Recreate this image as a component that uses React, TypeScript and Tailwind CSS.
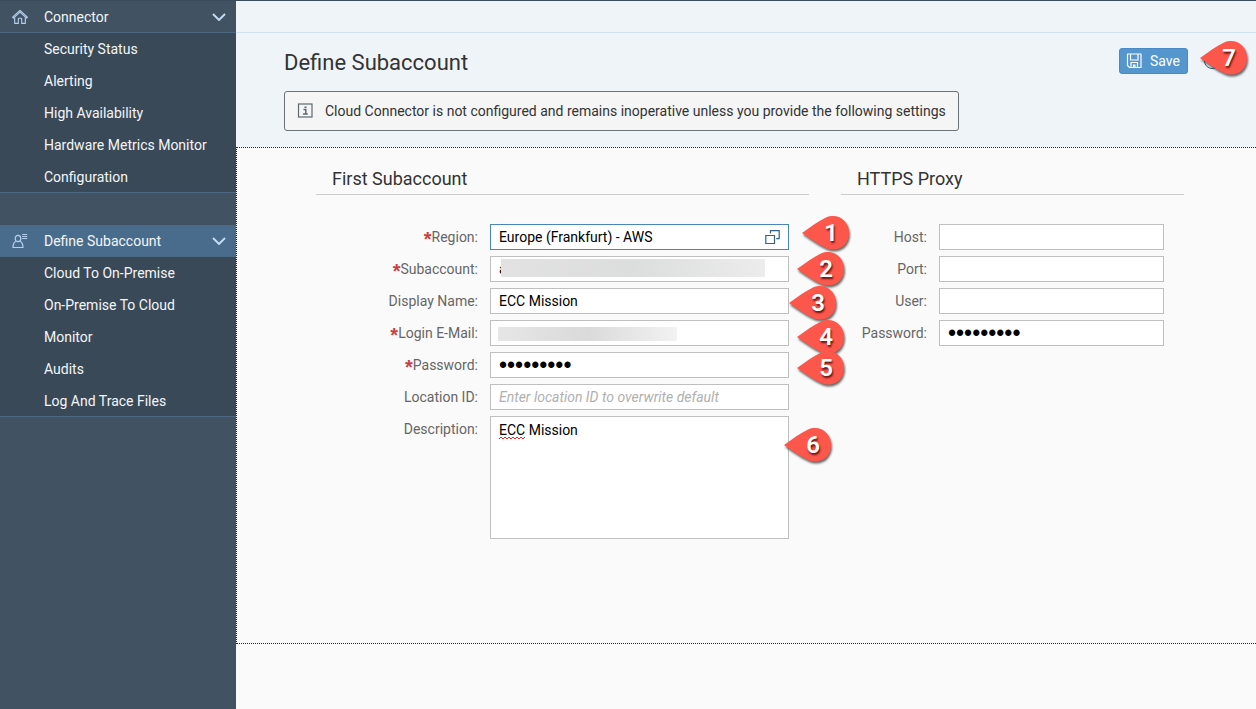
import React from "react";

const navGroups = [
  {
    title: "Connector",
    icon: "home",
    active: false,
    items: ["Security Status", "Alerting", "High Availability", "Hardware Metrics Monitor", "Configuration"],
  },
  {
    title: "Define Subaccount",
    icon: "account",
    active: true,
    items: ["Cloud To On-Premise", "On-Premise To Cloud", "Monitor", "Audits", "Log And Trace Files"],
  },
];

function HomeIcon() {
  return (
    <svg aria-hidden="true" className="size-4" viewBox="0 0 16 16" fill="none" stroke="#b5d0ee" strokeWidth="1.100">
      <path d="M.6 8.200 8 1.400l7.400 6.800-.9.900L8 3.200 1.500 9.100z" strokeLinejoin="round" />
      <path d="M2.700 8.500v5.900h3.600V9.900q0-.6.6-.6h2.200q.6 0 .6.6v4.500h3.600V8.500" strokeLinejoin="round" />
    </svg>
  );
}

function AccountIcon() {
  return (
    <svg aria-hidden="true" className="size-4" viewBox="0 0 16 16" fill="none" stroke="#b5d0ee" strokeWidth="1.200">
      <ellipse cx="6" cy="5.500" rx="2.800" ry="3.200" />
      <path d="M4 8.200C2 9 1 10.700 1 14.500h10C11 10.700 10 9 8 8.200" strokeLinejoin="round" />
      <path d="M10.200 1.500h5M10.200 3.500h5M10.200 5.500h5" strokeWidth="1" />
    </svg>
  );
}

function Chevron() {
  return (
    <svg aria-hidden="true" className="h-2 w-3.5" viewBox="0 0 14 8" fill="none" stroke="#c3dcf5" strokeWidth="1.900">
      <path d="M1 1l6 6 6-6" />
    </svg>
  );
}

function SaveIcon() {
  return (
    <svg aria-hidden="true" className="size-4" viewBox="0 0 16 16" fill="none" stroke="#fff" strokeWidth="1.200">
      <path d="M1.500 1h13.500v13.500H3.500l-2-2z" strokeLinejoin="round" />
      <path d="M4.500 1v6H12V1" />
      <path d="M5 14.500V9.500h6.500v5M7.500 14.500v-2.500h1.500v2.500" />
    </svg>
  );
}

function InfoIcon() {
  return (
    <svg aria-hidden="true" className="size-4 shrink-0" viewBox="0 0 16 16" fill="none" stroke="#5a6a70" strokeWidth="1.200">
      <rect x="1.500" y="1" width="13.500" height="13" />
      <path d="M7.500 4.300h2M6.500 6.600h2.300v4.400M6 11h4.800" strokeWidth="1.500" />
    </svg>
  );
}

function Marker({ n, className }: { n: number; className: string }) {
  return (
    <span className={"pointer-events-none absolute z-10 h-10 w-13 " + className}>
      <svg aria-hidden="true" className="size-full overflow-visible drop-shadow-[1px_2px_1px_rgba(0,0,0,0.6)]" viewBox="0 0 52 40">
        <path d="M0 17C8 11.500 16 5 24 1.500 36-3.500 47 5 47 17 47 29.500 36 37 24 32 16 28.500 8 22.500 0 17z" fill="#fd574b" />
      </svg>
      <span className="absolute top-0 left-0 w-[58px] text-center text-2xl leading-[34px] font-semibold text-white [text-shadow:1px_2px_2px_rgba(60,0,0,0.8)]">
        {n}
      </span>
    </span>
  );
}

function NavGroup({ group }: { group: (typeof navGroups)[number] }) {
  return (
    <div>
      <button
        type="button"
        className={
          "flex h-8 w-full items-center border-b pl-3 pr-2.5 text-left " +
          (group.active ? "border-[#4d6a84] bg-[#4a6c8c]" : "border-[#4c6883]")
        }
      >
        {group.icon === "home" ? <HomeIcon /> : <AccountIcon />}
        <span className="ml-4 flex-1">{group.title}</span>
        <Chevron />
      </button>
      <ul className="h-40 border-b border-[#4c6883] bg-[#3a4957]">
        {group.items.map((item) => (
          <li key={item}>
            <a href="#" className="block pl-11 leading-8">
              {item}
            </a>
          </li>
        ))}
      </ul>
    </div>
  );
}

const inputBase =
  "block h-[26px] w-full border border-[#bfbfbf] bg-white px-2 text-black outline-none placeholder:text-[#b0b0b0] placeholder:italic";
const inputBox = inputBase + " text-sm";
const secretBox = inputBase + " font-['Liberation_Sans',sans-serif] text-[23px]";

function Field({
  id,
  label,
  required,
  columns,
  children,
}: {
  id: string;
  label: string;
  required?: boolean;
  columns: string;
  children: React.ReactNode;
}) {
  return (
    <div className={"grid gap-3 " + columns}>
      <label htmlFor={id} className="h-[26px] text-right leading-[26px] whitespace-nowrap text-[#666]">
        {required && (
          <span className="font-['Liberation_Sans',sans-serif] text-xl leading-none font-bold text-[#cc3f3f] align-[-4px]">*</span>
        )}
        {label}:
      </label>
      <div className="relative min-w-0">{children}</div>
    </div>
  );
}

const leftCols = "grid-cols-[162fr_299fr]";
const rightCols = "grid-cols-[86fr_225fr]";

export default function App() {
  return (
    <div className="flex min-h-screen border-t border-[#3b4c5c] bg-[#fafafa] font-[Roboto,sans-serif] text-sm text-[#333]">
      <nav className="flex w-59 shrink-0 flex-col gap-8 bg-[#415262] text-[#f2f6fa]">
        {navGroups.map((g) => (
          <NavGroup key={g.title} group={g} />
        ))}
      </nav>

      <main className="min-w-0 flex-1">
        <div className="h-8 border-b border-[#cfe0f0] bg-[#eff4f9]" />
        <header className="bg-[#eff4f9] pt-3.5 pr-9 pb-4 pl-12">
          <div className="flex h-8 items-start">
            <h1 className="flex-1 text-[22px] leading-8">Define Subaccount</h1>
            <button
              type="button"
              className="mt-px flex h-[26px] items-center gap-2 rounded-[3px] border border-[#4a8ac4] bg-[#5496cd] pr-[7px] pl-1.5 text-white"
            >
              <SaveIcon />
              Save
            </button>
            <div className="relative mt-1.5 ml-4 h-4 w-4">
              <button type="button" aria-label="Help" className="block size-4 rounded-full border border-[#346187]" />
              <Marker n={7} className="-top-3 -left-1" />
            </div>
          </div>
          <div className="mt-3 flex h-10 w-fit items-center gap-3 rounded-[3px] border border-[#6a7378] bg-[#f5f5f6] px-3">
            <InfoIcon />
            <p>Cloud Connector is not configured and remains inoperative unless you provide the following settings</p>
          </div>
        </header>

        <form className="grid grid-cols-[493fr_343fr] gap-8 border-y border-l border-dotted border-[#222] pt-4 pr-18 pb-26 pl-[79px]">
          <section>
            <h2 className="mb-[29px] border-b border-[#ccc] pl-4 text-lg leading-[30px]">First Subaccount</h2>
            <div className="flex flex-col gap-1.5 pr-5">
              <Field id="region" label="Region" required columns={leftCols}>
                <input id="region" className={inputBox + " border-[#4886b8]!"} defaultValue="Europe (Frankfurt) - AWS" />
                <button type="button" aria-label="Choose region" className="absolute top-1.5 right-2">
                  <svg className="size-4" viewBox="0 0 16 16" fill="none" stroke="#346187" strokeWidth="1.200">
                    <path d="M.8 5.500h8.700v8H.8z" />
                    <path d="M5.500 3.500V.6h8.700v8h-3" />
                  </svg>
                </button>
                <Marker n={1} className="-top-2 left-[calc(100%+13px)]" />
              </Field>
              <Field id="subaccount" label="Subaccount" required columns={leftCols}>
                <input id="subaccount" className={inputBox} defaultValue="a" />
                <span className="absolute top-[3px] right-6 left-[11px] h-[18px] bg-linear-to-r from-[#e2e2e2] via-[#dcdddd] to-[#ececec]" />
                <Marker n={2} className="-top-1 left-[calc(100%+8px)]" />
              </Field>
              <Field id="display" label="Display Name" columns={leftCols}>
                <input id="display" className={inputBox} defaultValue="ECC Mission" />
                <Marker n={3} className="-top-0.5 left-full" />
              </Field>
              <Field id="email" label="Login E-Mail" required columns={leftCols}>
                <input id="email" className={inputBox} />
                <span className="absolute top-[7px] left-2 h-3.5 w-[179px] bg-linear-to-r from-[#e6e6e6] via-[#dadada] to-[#f2f2f2]" />
                <Marker n={4} className="top-0 left-[calc(100%+8px)]" />
              </Field>
              <Field id="password" label="Password" required columns={leftCols}>
                <input id="password" type="password" className={secretBox} defaultValue="secretkey" />
                <Marker n={5} className="-top-px left-[calc(100%+8px)]" />
              </Field>
              <Field id="location" label="Location ID" columns={leftCols}>
                <input id="location" className={inputBox} placeholder="Enter location ID to overwrite default" />
              </Field>
              <Field id="description" label="Description" columns={leftCols}>
                <textarea
                  id="description"
                  spellCheck={false}
                  className="block h-[123px] w-full resize-none border border-[#bfbfbf] bg-white px-2 py-0.5 text-sm leading-[22px] text-black outline-none"
                  defaultValue="ECC Mission"
                />
                <svg aria-hidden="true" className="absolute top-5 left-[9px] h-1 w-[26px]" viewBox="0 0 26 4" fill="none" stroke="#f22">
                  <path d="M0 3l2-2 2 2 2-2 2 2 2-2 2 2 2-2 2 2 2-2 2 2 2-2 2 2 2-2" />
                </svg>
                <Marker n={6} className="top-3 left-[calc(100%-5px)]" />
              </Field>
            </div>
          </section>

          <section>
            <h2 className="mb-[29px] border-b border-[#ccc] pl-4 text-lg leading-[30px]">HTTPS Proxy</h2>
            <div className="flex flex-col gap-1.5 pr-5">
              <Field id="host" label="Host" columns={rightCols}>
                <input id="host" className={inputBox} />
              </Field>
              <Field id="port" label="Port" columns={rightCols}>
                <input id="port" className={inputBox} />
              </Field>
              <Field id="user" label="User" columns={rightCols}>
                <input id="user" className={inputBox} />
              </Field>
              <Field id="proxy-password" label="Password" columns={rightCols}>
                <input id="proxy-password" type="password" className={secretBox} defaultValue="secretkey" />
              </Field>
            </div>
          </section>
        </form>
      </main>
    </div>
  );
}
